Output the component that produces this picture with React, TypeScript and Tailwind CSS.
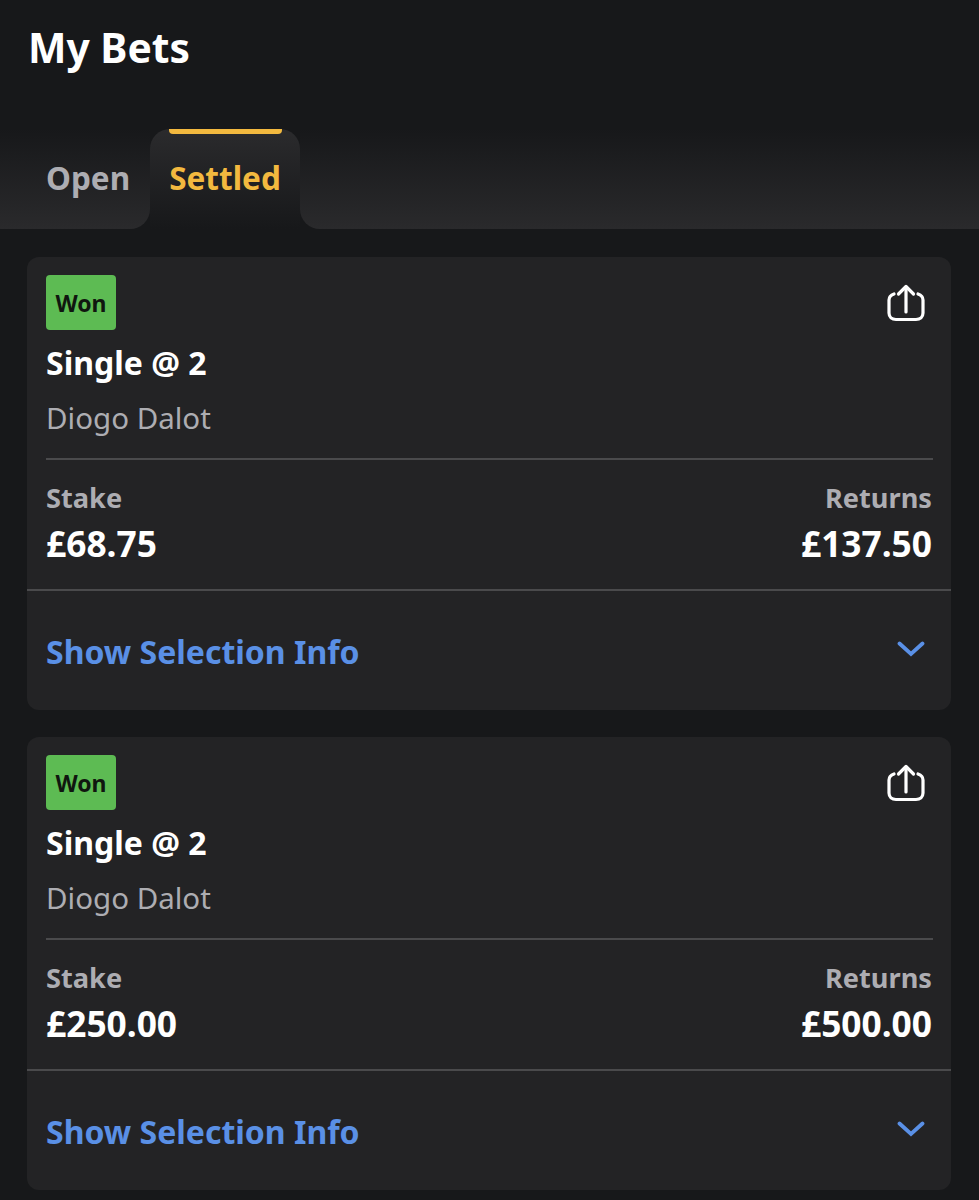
import React from 'react';

const ShareIcon = () => (
  <svg width="40" height="40" viewBox="0 0 40 40" fill="none" stroke="white" strokeWidth="3.2" strokeLinecap="round" strokeLinejoin="round">
    <path d="M8 11C5 12 3 14 3 17V30C3 34 6 36.500 10 36.500H30C34 36.500 37 34 37 30V17C37 14 35 12 32 11" />
    <path d="M20 29V4" />
    <path d="M12.500 11 20 3.500 27.500 11" />
  </svg>
);

const Chevron = () => (
  <svg width="28" height="16" viewBox="0 0 28 16" fill="none" stroke="#5a90e6" strokeWidth="3.800" strokeLinecap="round" strokeLinejoin="miter">
    <path d="M2.500 2.500 14 13 25.500 2.500" />
  </svg>
);

interface BetProps {
  stake: string;
  returns: string;
}

const BetCard: React.FC<BetProps> = ({ stake, returns }) => {
  return (
    <div className="w-[924px] h-[453px] rounded-xl bg-[#232325] flex flex-col">
      <div className="px-[19px] pt-[18px]">
        <div className="flex flex-row justify-between items-start">
          <div className="w-[70px] h-[55px] pt-[2px] rounded-[4px] bg-[#5dbb53] flex items-center justify-center text-[23px] font-bold text-[#10160f]">
            Won
          </div>
          <div className="mr-[6px] mt-[8px]">
            <ShareIcon />
          </div>
        </div>
        <div className="mt-[12px] text-[32px] leading-[42px] font-bold text-white">Single @ 2</div>
        <div className="mt-[14px] text-[29.5px] leading-[40px] text-[#adadb2]">Diogo Dalot</div>
        <div className="mt-[20px] -mr-px h-[2px] bg-[#4a4a4c]" />
        <div className="flex flex-row justify-between mt-[20px]">
          <div>
            <div className="text-[27.200px] leading-[36px] font-bold text-[#adadb2]">Stake</div>
            <div className="text-[35.300px] leading-[48px] mt-[3px] font-bold text-white">{stake}</div>
          </div>
          <div className="text-right">
            <div className="text-[27.200px] leading-[36px] font-bold text-[#adadb2]">Returns</div>
            <div className="text-[35.300px] leading-[48px] mt-[3px] font-bold text-white">{returns}</div>
          </div>
        </div>
      </div>
      <div className="mt-[22px] h-[2px] bg-[#4a4a4c]" />
      <div className="flex-1 flex flex-row justify-between items-center px-[19px] pt-[2px]">
        <span className="text-[32px] font-bold text-[#5a90e6]">Show Selection Info</span>
        <span className="mr-[7px] mb-[6px]"><Chevron /></span>
      </div>
    </div>
  );
};

export default function App() {
  return (
    <div className="w-[979px] h-[1200px] overflow-hidden bg-[#17181a] font-['Noto_Sans',sans-serif]">
      <div className="h-[129px] pl-[28px] pt-[21px]">
        <h1 className="text-[40.800px] leading-[52px] font-bold text-white">My Bets</h1>
      </div>
      <div className="flex flex-row h-[100px]">
        <div className="w-[150px] rounded-br-[20px] bg-linear-to-b from-[#17181a] to-[#2a2a2c] flex items-center pl-[46px] pb-[2px]">
          <span className="text-[31.500px] font-bold text-[#adadb2]">Open</span>
        </div>
        <div className="relative w-[150px] rounded-t-[20px] bg-linear-to-b from-[#2b2b2d] to-[#17181a] flex items-center justify-center pb-[2px]">
          <div className="absolute top-0 left-[19px] right-[18px] h-[5px] rounded-b-[4px] bg-[#f3b93f]" />
          <span className="text-[31.500px] font-bold text-[#f3b93f]">Settled</span>
        </div>
        <div className="flex-1 rounded-bl-[20px] bg-linear-to-b from-[#17181a] to-[#2a2a2c]" />
      </div>
      <div className="flex flex-col gap-[27px] pl-[27px] pt-[28px]">
        <BetCard stake="£68.75" returns="£137.50" />
        <BetCard stake="£250.00" returns="£500.00" />
      </div>
    </div>
  );
}
